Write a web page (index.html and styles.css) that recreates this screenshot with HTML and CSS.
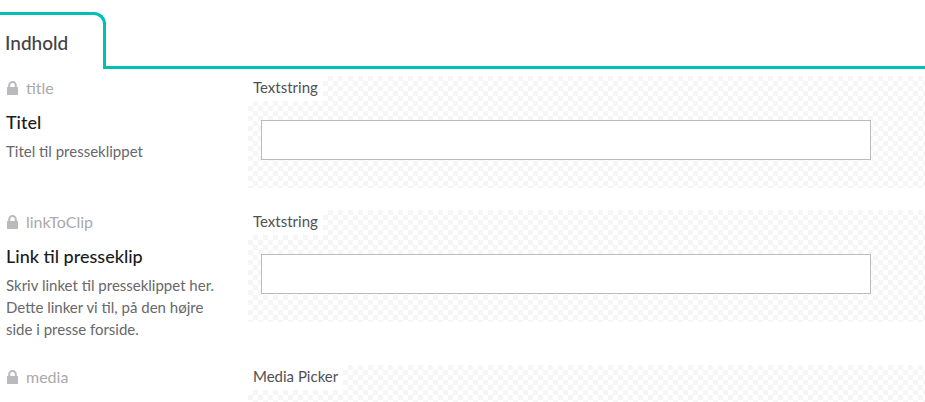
FILE: index.html
```
<!DOCTYPE html>
<html lang="da">
<head>
    <meta charset="UTF-8">
    <meta name="viewport" content="width=device-width, initial-scale=1.0">
    <title>Indhold</title>
    <link rel="stylesheet" href="styles.css">
</head>
<body>
    <svg class="sprite" aria-hidden="true">
        <symbol id="lock" viewBox="0 0 11 14">
            <path d="M2.200 6.500V4.300a3.300 3.300 0 0 1 6.600 0v2.200" fill="none" stroke="currentColor" stroke-width="2"/>
            <rect x="0" y="6" width="11" height="8" rx="0.500" fill="currentColor"/>
        </symbol>
    </svg>

    <nav class="tabs">
        <a href="#indhold" class="tab">Indhold</a>
        <div class="tabs-line"></div>
    </nav>

    <main id="indhold" class="properties">
        <section class="property">
            <div class="property-info">
                <div class="alias"><svg class="lock"><use href="#lock"/></svg>title</div>
                <label class="name" for="title">Titel</label>
                <p class="description">Titel til presseklippet</p>
            </div>
            <div class="preview">
                <span class="editor">Textstring</span>
                <input type="text" id="title" class="textbox">
            </div>
        </section>

        <section class="property">
            <div class="property-info">
                <div class="alias"><svg class="lock"><use href="#lock"/></svg>linkToClip</div>
                <label class="name" for="linkToClip">Link til presseklip</label>
                <p class="description">Skriv linket til presseklippet her. Dette linker vi til, på den højre side i presse forside.</p>
            </div>
            <div class="preview">
                <span class="editor">Textstring</span>
                <input type="text" id="linkToClip" class="textbox">
            </div>
        </section>

        <section class="property">
            <div class="property-info">
                <div class="alias"><svg class="lock"><use href="#lock"/></svg>media</div>
            </div>
            <div class="preview preview-empty">
                <span class="editor">Media Picker</span>
            </div>
        </section>
    </main>
</body>
</html>
```
FILE: styles.css
```
* {
    margin: 0;
    padding: 0;
    box-sizing: border-box;
}

body {
    font-family: Lato, sans-serif;
    font-size: 15px;
    line-height: 22px;
    color: #515054;
    background: white;
}

.sprite {
    display: none;
}

/* Tabs */
.tabs {
    display: flex;
    align-items: flex-end;
    padding-top: 12px;
}

.tab {
    height: 57px;
    padding: 17px 35px 0 5px;
    border-top: 3px solid #00bfb3;
    border-right: 3px solid #00bfb3;
    border-top-right-radius: 12px;
    font-size: 19px;
    font-weight: 500;
    color: #424146;
    text-decoration: none;
}

.tabs-line {
    flex: 1;
    height: 3px;
    background: #00bfb3;
}

/* Properties */
.properties {
    padding-top: 7px;
}

.property {
    display: grid;
    grid-template-columns: 248px 1fr;
    align-items: start;
}

.property + .property {
    margin-top: 22px;
}

.property-info {
    padding: 1px 30px 0 6px;
}

.alias {
    display: flex;
    align-items: center;
    gap: 7px;
    font-size: 16px;
    color: #a9a9ad;
}

.lock {
    width: 13px;
    height: 14px;
    color: #b9b9be;
}

.name {
    display: block;
    margin: 12px 0 7px;
    font-size: 18px;
    font-weight: 500;
    color: #1b1b1d;
}

.description {
    padding-bottom: 3px;
    color: #68676b;
}

.preview {
    min-height: 112px;
    padding-right: 54px;
    /* checkerboard, 5px squares */
    background: conic-gradient(#fff 25%, #f6f6f6 0 50%, #fff 0 75%, #f6f6f6 0) 0 0 / 10px 10px;
}

.preview-empty {
    min-height: 37px;
}

.editor {
    display: table;
    height: 25px;
    padding: 0 5px;
    background: white;
}

.textbox {
    display: block;
    width: calc(100% - 13px);
    height: 40px;
    margin: 19px 0 0 13px;
    padding: 0 8px;
    border: 1px solid #bbbabf;
    background: white;
    font: inherit;
}
```
